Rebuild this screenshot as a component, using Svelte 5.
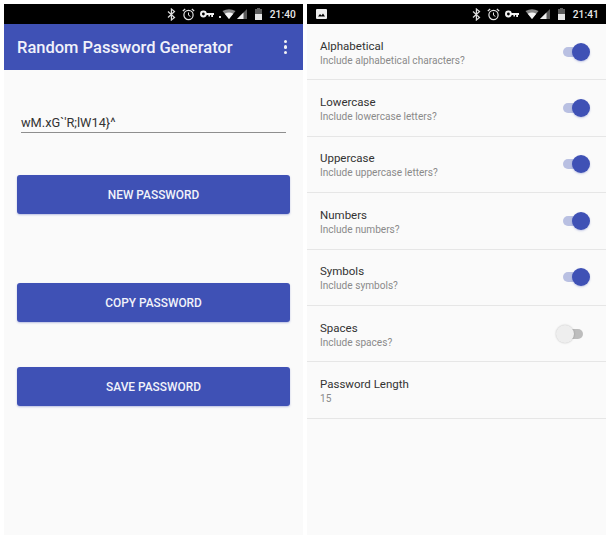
<script>
    let settings = [
        { title: 'Alphabetical', sub: 'Include alphabetical characters?', on: true },
        { title: 'Lowercase', sub: 'Include lowercase letters?', on: true },
        { title: 'Uppercase', sub: 'Include uppercase letters?', on: true },
        { title: 'Numbers', sub: 'Include numbers?', on: true },
        { title: 'Symbols', sub: 'Include symbols?', on: true },
        { title: 'Spaces', sub: 'Include spaces?', on: false }
    ];
</script>

{#snippet statusIcons(time, dot)}
    <svg class="bt" width="9" height="13" viewBox="0 0 9 13">
        <path d="M1 3.5 L7.5 9.5 L4.4 12 V1 L7.5 3.5 L1 9.5" fill="none" stroke="#ddd" stroke-width="1.2"/>
    </svg>
    <svg class="alarm" width="13" height="13" viewBox="0 0 13 13">
        <circle cx="6.5" cy="7" r="4.6" fill="none" stroke="#e4e4e4" stroke-width="1.2"/>
        <path d="M6.5 4.5 V7.2 L8.4 8.4" fill="none" stroke="#e4e4e4" stroke-width="1"/>
        <path d="M0.8 3 L3.2 1 M12.2 3 L9.8 1" stroke="#e4e4e4" stroke-width="1.2"/>
    </svg>
    <svg class="key" width="14" height="8" viewBox="0 0 14 8">
        <circle cx="3.4" cy="4" r="2.4" fill="none" stroke="#f2f2f2" stroke-width="2"/>
        <path d="M5.5 2.9 H14 V5.1 H13 V7 H11.2 V5.1 H10 V6.4 H8.4 V5.1 H5.5 Z" fill="#f2f2f2"/>
    </svg>
    {#if dot}
        <span class="dot"></span>
    {/if}
    <svg class="wifi" class:nodot={!dot} width="14" height="10" viewBox="0 0 13 10">
        <path d="M0 2 Q6.5 -1.5 13 2 L6.5 10 Z" fill="#8a8a8a"/>
        <path d="M2.2 4.7 Q6.5 2.4 10.8 4.7 L6.5 10 Z" fill="#f4f4f4"/>
    </svg>
    <svg class="cell" width="10" height="10" viewBox="0 0 10 10">
        <path d="M10 0 V10 H0 Z" fill="#5a5a5a"/>
        <path d="M6.5 3.6 V10 H0 Z" fill="#efefef"/>
    </svg>
    <svg class="battery" width="7" height="12" viewBox="0 0 7 12">
        <path d="M2 0 H5 V1 H7 V12 H0 V1 H2 Z" fill="#5c5c5c"/>
        <rect x="0" y="6" width="7" height="6" fill="#e6e6e6"/>
    </svg>
    <span class="time">{time}</span>
{/snippet}

<div class="page">
    <section class="phone">
        <div class="status">
            {@render statusIcons('21:40', true)}
        </div>
        <header class="appbar">
            <h1>Random Password Generator</h1>
            <div class="menu"><i></i><i></i><i></i></div>
        </header>
        <main class="generator">
            <div class="field">wM.xG`'R;lW14}^</div>
            <button class="first">NEW PASSWORD</button>
            <button class="second">COPY PASSWORD</button>
            <button class="third">SAVE PASSWORD</button>
        </main>
    </section>

    <section class="phone">
        <div class="status">
            <svg class="picture" width="11" height="10" viewBox="0 0 11 10">
                <rect width="11" height="10" rx="1" fill="#eee"/>
                <path d="M2 7.5 L4 5 L5.5 6.5 L7 4.5 L9 7.5 Z" fill="#000"/>
            </svg>
            <span class="grow"></span>
            {@render statusIcons('21:41', false)}
        </div>
        <div class="settings">
            {#each settings as s}
                <div class="row">
                    <div class="labels">
                        <div class="title">{s.title}</div>
                        <div class="sub">{s.sub}</div>
                    </div>
                    <div class="switch" class:on={s.on}><span></span></div>
                </div>
            {/each}
            <div class="row">
                <div class="labels">
                    <div class="title">Password Length</div>
                    <div class="sub">15</div>
                </div>
            </div>
        </div>
    </section>
</div>

<style>
    :global(body) {
        background: #fff;
        font-family: Roboto, "Liberation Sans", sans-serif;
    }

    .page {
        display: flex;
        gap: 4px;
        width: 610px;
        height: 539px;
        padding: 4px;
        box-sizing: border-box;
    }

    .phone {
        width: 299px;
        height: 531px;
        background: #fafafa;
        display: flex;
        flex-direction: column;
    }

    .status {
        height: 20px;
        flex: none;
        background: #000;
        display: flex;
        align-items: center;
        padding: 0 7px 0 9px;
        justify-content: flex-end;
    }

    .grow {
        flex: 1;
    }

    .bt {
        margin-right: 6px;
    }

    .alarm {
        margin-right: 5px;
    }

    .key {
        margin-right: 5px;
    }

    .dot {
        width: 2px;
        height: 2px;
        background: #ddd;
        margin: 5px 1px 0 0;
    }

    .wifi {
        margin-right: 1px;
    }

    .wifi.nodot {
        margin-left: 1px;
    }

    .cell {
        margin-right: 8px;
    }

    .battery {
        margin-right: 8px;
    }

    .time {
        color: #e8e8e8;
        font-size: 10.2px;
        font-weight: 500;
        letter-spacing: 0.1px;
    }

    .appbar {
        height: 46px;
        flex: none;
        background: #3f51b5;
        display: flex;
        align-items: center;
        justify-content: space-between;
        padding: 0 16px 0 13px;
    }

    h1 {
        margin: 0;
        color: #f1f2fa;
        font-size: 16.5px;
        font-weight: 500;
    }

    .menu {
        display: flex;
        flex-direction: column;
        gap: 2px;
    }

    .menu i {
        width: 3.5px;
        height: 3.5px;
        border-radius: 50%;
        background: #f4f4f4;
    }

    .generator {
        flex: 1;
        display: flex;
        flex-direction: column;
        padding: 0 13px;
    }

    .field {
        margin: 43px 4px 0 4px;
        height: 19px;
        border-bottom: 1px solid #8e8e8e;
        font-size: 12.8px;
        line-height: 20px;
        color: #333;
    }

    button {
        height: 39px;
        width: 273px;
        flex: none;
        border: none;
        border-radius: 3px;
        background: #3f51b5;
        color: #f2f3fa;
        font-family: inherit;
        font-size: 11.9px;
        font-weight: 500;
        padding: 0;
        box-shadow: 0 1px 2px rgba(63, 81, 181, 0.35);
    }

    .first {
        margin-top: 42px;
    }

    .second {
        margin-top: 69px;
    }

    .third {
        margin-top: 45px;
    }

    .settings {
        display: flex;
        flex-direction: column;
    }

    .row {
        height: 55.4px;
        border-bottom: 1px solid #e6e6e6;
        display: flex;
        align-items: center;
        justify-content: space-between;
        padding: 0 16px 0 13px;
    }

    .labels {
        margin-top: 3px;
    }

    .title {
        font-size: 11.5px;
        line-height: 15px;
        color: #333;
    }

    .sub {
        font-size: 10.1px;
        line-height: 14px;
        color: #8a8a8a;
    }

    .switch {
        position: relative;
        width: 34px;
        height: 18px;
    }

    .switch::before {
        content: "";
        position: absolute;
        top: 4px;
        left: 7px;
        width: 20px;
        height: 10px;
        border-radius: 5px;
        background: #bdbdbd;
    }

    .switch span {
        position: absolute;
        top: 0;
        left: 0;
        width: 18px;
        height: 18px;
        border-radius: 50%;
        background: #eee;
        box-shadow: 0 0 2px rgba(0, 0, 0, 0.25);
    }

    .switch.on::before {
        background: #b9c0e2;
    }

    .switch.on span {
        left: 16px;
        background: #3f51b5;
        box-shadow: 0 1px 2px rgba(63, 81, 181, 0.3);
    }
</style>
